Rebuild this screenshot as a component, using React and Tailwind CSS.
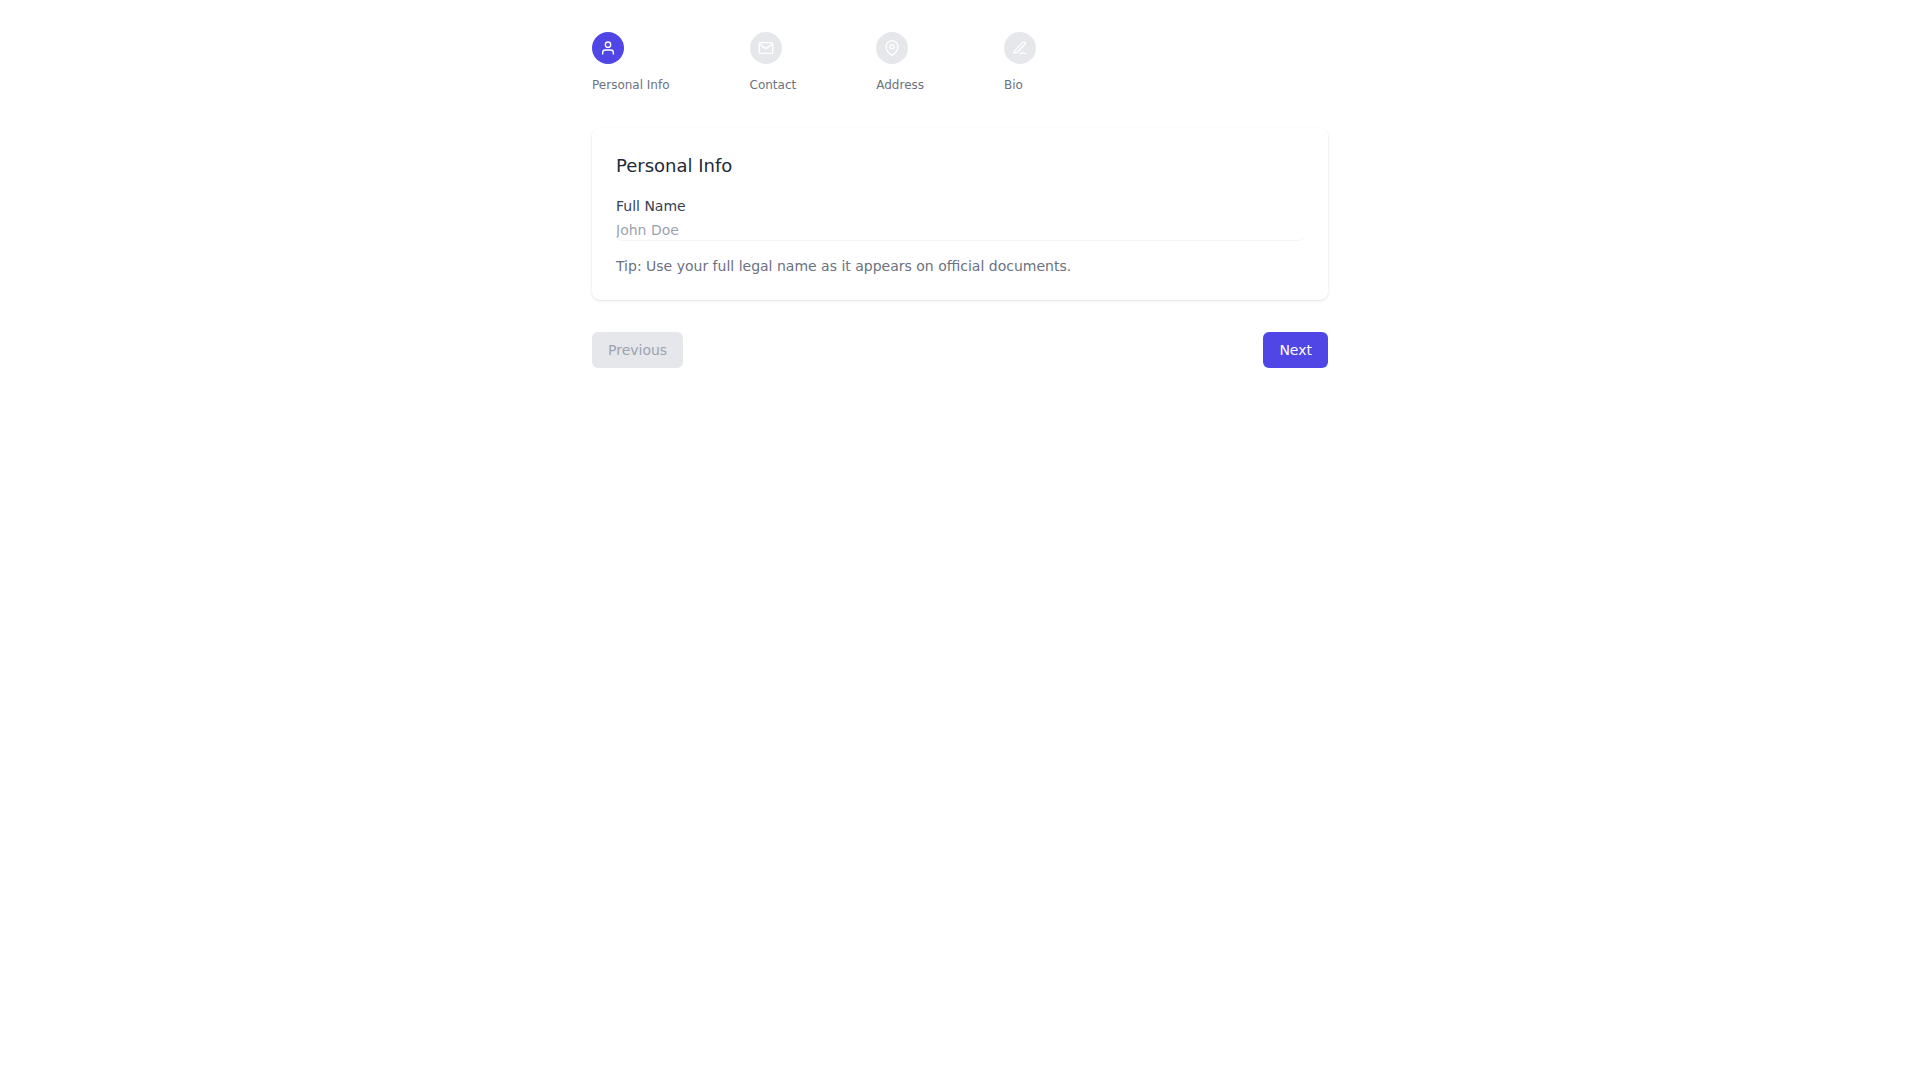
import React from "react";
import { FiUser, FiMail, FiMapPin, FiEdit3 } from "react-icons/fi";

const steps = [
  { label: "Personal Info", Icon: FiUser, active: true },
  { label: "Contact", Icon: FiMail },
  { label: "Address", Icon: FiMapPin },
  { label: "Bio", Icon: FiEdit3 },
];

export default function App() {
  return (
    <div className="min-h-screen bg-white font-['DejaVu_Sans',sans-serif]">
      <div className="mx-auto w-full max-w-3xl px-4 py-8">
        <div className="flex gap-20 mb-[35px]">
          {steps.map(({ label, Icon, active }) => (
            <div key={label} className="flex flex-col items-start">
              <div className={active ? "w-8 h-8 rounded-full flex items-center justify-center text-white bg-[#4f46e5]" : "w-8 h-8 rounded-full flex items-center justify-center text-white bg-[#e5e7eb]"}>
                <Icon className="w-4 h-4" />
              </div>
              <span className="mt-[13px] text-xs text-[#6b7280]">{label}</span>
            </div>
          ))}
        </div>
        <div className="bg-white rounded-lg shadow-sm p-6">
          <h2 className="text-lg text-[#1f2937] mb-4">Personal Info</h2>
          <label className="block text-sm text-[#374151] mb-1">Full Name</label>
          <input placeholder="John Doe" className="block w-full text-sm border-b border-[#f3f4f6] rounded-md outline-none placeholder:text-[#9ca3af]" />
          <p className="mt-[15px] text-sm text-[#6b7280]">Tip: Use your full legal name as it appears on official documents.</p>
        </div>
        <div className="flex justify-between mt-8">
          <button className="px-4 py-2 text-sm rounded-md bg-[#e5e7eb] text-[#9ca3af]">Previous</button>
          <button className="px-4 py-2 text-sm rounded-md bg-[#4f46e5] text-white">Next</button>
        </div>
      </div>
    </div>
  );
}
